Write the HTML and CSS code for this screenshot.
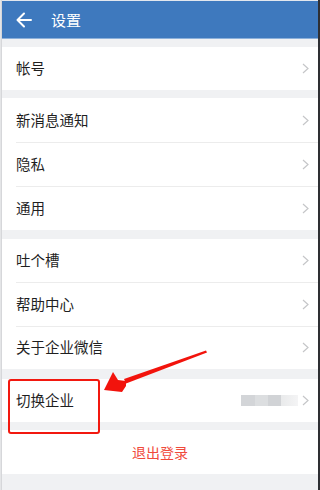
FILE: index.html
```html
<!DOCTYPE html>
<html lang="zh">
<head>
<meta charset="utf-8">
<link rel="stylesheet" href="styles.css">
</head>
<body>
<div class="frame">
  <div class="edge-left"></div>
  <div class="main">
    <div class="topline"></div>
    <header class="bar">
      <svg class="back" width="16" height="16" viewBox="0 0 16 16"><path d="M15 8H2M8 1.5L1.5 8L8 14.5" fill="none" stroke="#fff" stroke-width="2" stroke-linecap="round" stroke-linejoin="round"/></svg>
      <span class="title">设置</span>
    </header>
    <div class="barline"></div>

    <section class="group g1">
      <div class="row h43"><span class="label">帐号</span><svg class="chev" width="7" height="11" viewBox="0 0 7 11"><path d="M1 1l5 4.5L1 10" fill="none" stroke="#c5c6c8" stroke-width="1.2"/></svg></div>
    </section>

    <section class="group g2">
      <div class="row"><span class="label">新消息通知</span><svg class="chev" width="7" height="11" viewBox="0 0 7 11"><path d="M1 1l5 4.5L1 10" fill="none" stroke="#c5c6c8" stroke-width="1.2"/></svg></div>
      <div class="row"><span class="label">隐私</span><svg class="chev" width="7" height="11" viewBox="0 0 7 11"><path d="M1 1l5 4.5L1 10" fill="none" stroke="#c5c6c8" stroke-width="1.2"/></svg></div>
      <div class="row"><span class="label">通用</span><svg class="chev" width="7" height="11" viewBox="0 0 7 11"><path d="M1 1l5 4.5L1 10" fill="none" stroke="#c5c6c8" stroke-width="1.2"/></svg></div>
    </section>

    <section class="group g3">
      <div class="row h43"><span class="label">吐个槽</span><svg class="chev" width="7" height="11" viewBox="0 0 7 11"><path d="M1 1l5 4.5L1 10" fill="none" stroke="#c5c6c8" stroke-width="1.2"/></svg></div>
      <div class="row"><span class="label">帮助中心</span><svg class="chev" width="7" height="11" viewBox="0 0 7 11"><path d="M1 1l5 4.5L1 10" fill="none" stroke="#c5c6c8" stroke-width="1.2"/></svg></div>
      <div class="row h43"><span class="label">关于企业微信</span><svg class="chev" width="7" height="11" viewBox="0 0 7 11"><path d="M1 1l5 4.5L1 10" fill="none" stroke="#c5c6c8" stroke-width="1.2"/></svg></div>
    </section>

    <section class="group g4">
      <div class="row h43"><span class="label">切换企业</span><span class="blur"></span><svg class="chev near" width="7" height="11" viewBox="0 0 7 11"><path d="M1 1l5 4.5L1 10" fill="none" stroke="#c5c6c8" stroke-width="1.2"/></svg></div>
    </section>

    <section class="group g5">
      <div class="row logout">退出登录</div>
    </section>
  </div>
  <div class="edge-right"></div>

  <div class="mark-box"></div>
  <svg class="mark-arrow" width="320" height="490" viewBox="0 0 320 490">
    <path d="M206 350.5 L207 352.5 L126 383.5 L124 379 Z" fill="#f2130c"/>
    <path d="M104 390 L113 372 L118 380 L126 381 L126 386 L122 392 Z" fill="#f2130c"/>
  </svg>
</div>
</body>
</html>
```

FILE: styles.css
```css
* { box-sizing: border-box; }
html, body { margin: 0; padding: 0; }
body {
  width: 320px;
  height: 490px;
  overflow: hidden;
  background: #f0f1f3;
  font-family: "Noto Sans CJK SC", "Noto Sans", sans-serif;
}
.frame {
  position: relative;
  display: flex;
  width: 320px;
  height: 490px;
}
.edge-left {
  width: 2px;
  background: #e4e5e7;
  border-right: 1px solid #d6d7da;
}
.edge-right {
  width: 2px;
  background: #2e2f33;
}
.main {
  flex: 1;
  display: flex;
  flex-direction: column;
  background: #f0f1f3;
}
.topline {
  height: 1px;
  background: #e2e7ee;
}
.bar {
  height: 37px;
  background: #3e79be;
  display: flex;
  align-items: center;
  padding-left: 14px;
}
.back { display: block; }
.title {
  margin-left: 19px;
  color: #fff;
  font-size: 15px;
  line-height: 1;
}
.barline {
  height: 1px;
  background: #8cb0da;
}
.group {
  background: #fff;
  display: flex;
  flex-direction: column;
}
.g1 { margin-top: 8px; }
.g2 { margin-top: 8px; }
.g3 { margin-top: 9px; }
.g4 { margin-top: 10px; }
.g5 { margin-top: 8px; }
.row {
  height: 44px;
  display: flex;
  align-items: center;
  padding-left: 14px;
  padding-right: 9px;
  position: relative;
}
.row.h43 { height: 43px; }
.row + .row::before {
  content: "";
  position: absolute;
  left: 14px;
  right: 0;
  top: 0;
  height: 1px;
  background: #ececec;
}
.label {
  flex: 1;
  font-size: 14.5px;
  color: #1f1f1f;
  line-height: 1;
}
.chev { display: block; }
.blur {
  width: 57px;
  height: 11px;
  margin-right: 4px;
  background: linear-gradient(90deg, #d3d5d8 0, #d3d5d8 24%, #dcdee0 24%, #dcdee0 47%, #d1d3d6 47%, #d1d3d6 70%, #e9eaeb 70%, #f4f4f5 100%);
}
.logout {
  justify-content: center;
  padding: 0;
  color: #f04a3c;
  font-size: 14px;
}
.mark-box {
  position: absolute;
  left: 8px;
  top: 379px;
  width: 92px;
  height: 55px;
  border: 2px solid #f2180f;
  border-radius: 3px;
}
.mark-arrow {
  position: absolute;
  left: 0;
  top: 0;
  pointer-events: none;
}
```
